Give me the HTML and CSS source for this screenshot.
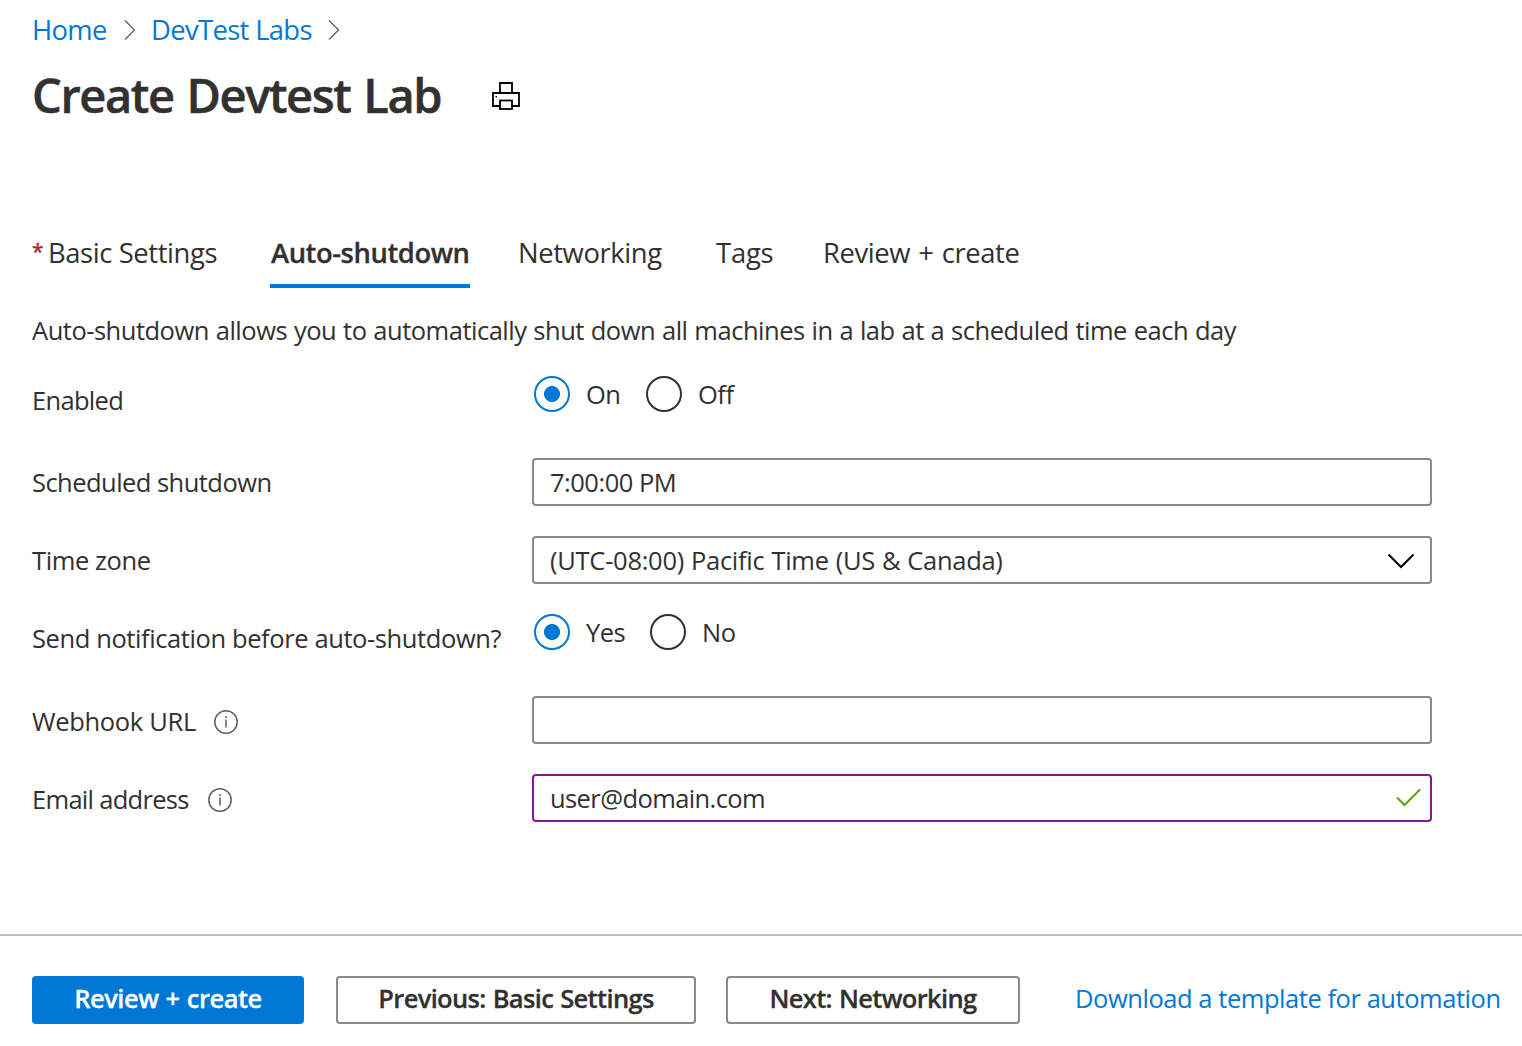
FILE: index.html
```html
<!DOCTYPE html>
<html lang="en">
<head>
<meta charset="utf-8">
<title>Create Devtest Lab</title>
<link rel="stylesheet" href="styles.css">
</head>
<body>
<div class="page">
  <nav class="breadcrumb">
    <a class="crumb crumb-home">Home</a>
    <svg class="crumb-sep" width="12" height="22" viewBox="0 0 12 22"><path d="M1 1.5 L10.5 11 L1 20.5"/></svg>
    <a class="crumb crumb-labs">DevTest Labs</a>
    <svg class="crumb-sep" width="12" height="22" viewBox="0 0 12 22"><path d="M1 1.5 L10.5 11 L1 20.5"/></svg>
  </nav>
  <header class="title-bar">
    <h1 class="title">Create Devtest Lab</h1>
    <svg class="printer" width="28" height="28" viewBox="0 0 28 28">
      <path d="M8 10.5V1H20V10.5M8 24H1V11H27V24H20"/><rect x="8" y="18.5" width="12" height="8.5"/><path class="printer-light" d="M3.5 14.6H5"/>
    </svg>
  </header>
  <div class="tabs">
    <div class="tab tab-basic"><span class="required">*</span>Basic Settings</div>
    <div class="tab tab-active">Auto-shutdown</div>
    <div class="tab tab-net">Networking</div>
    <div class="tab tab-tags">Tags</div>
    <div class="tab tab-review">Review + create</div>
  </div>
  <p class="description">Auto-shutdown allows you to automatically shut down all machines in a lab at a scheduled time each day</p>
  <form class="form">
    <div class="row row-radio">
      <label class="label label-tight">Enabled</label>
      <div class="radios">
        <span class="radio radio-on"></span><span class="radio-text">On</span>
        <span class="radio"></span><span class="radio-text">Off</span>
      </div>
    </div>
    <div class="row">
      <label class="label label-schedule">Scheduled shutdown</label>
      <div class="field field-time">7:00:00 PM</div>
    </div>
    <div class="row">
      <label class="label">Time zone</label>
      <div class="field field-zone">(UTC-08:00) Pacific Time (US &amp; Canada)
        <svg class="chevron" width="28" height="16" viewBox="0 0 28 16"><path d="M1.5 1.5 L14 14 L26.5 1.5"/></svg></div>
    </div>
    <div class="row row-radio">
      <label class="label">Send notification before auto-shutdown?</label>
      <div class="radios radios-notify">
        <span class="radio radio-on"></span><span class="radio-text">Yes</span>
        <span class="radio"></span><span class="radio-text">No</span>
      </div>
    </div>
    <div class="row">
      <label class="label label-info label-webhook"><span class="label-text">Webhook URL</span>
        <svg class="info" width="24" height="24" viewBox="0 0 24 24"><circle cx="12" cy="12" r="11.2"/><path d="M12 9.5V17.5M12 6V8"/></svg></label>
      <div class="field"></div>
    </div>
    <div class="row">
      <label class="label label-info label-email label-tight"><span class="label-text">Email address</span>
        <svg class="info" width="24" height="24" viewBox="0 0 24 24"><circle cx="12" cy="12" r="11.2"/><path d="M12 9.5V17.5M12 6V8"/></svg></label>
      <div class="field field-valid">user@domain.com
        <svg class="check" width="25" height="19" viewBox="0 0 25 19"><path d="M1 9.5 L8.5 17 L24 1.5"/></svg></div>
    </div>
  </form>
  <footer class="footer">
    <button class="button button-primary">Review + create</button>
    <button class="button button-prev">Previous: Basic Settings</button>
    <button class="button button-next">Next: Networking</button>
    <a class="download">Download a template for automation</a>
  </footer>
</div>
</body>
</html>
```

FILE: styles.css
```css
* { box-sizing: border-box; }
body {
  margin: 0;
  background: #fff;
  color: #323130;
  font-family: "Open Sans", "Noto Sans", sans-serif;
  font-size: 25.5px;
}
.page { display: flex; flex-direction: column; width: 1522px; height: 1046px; overflow: hidden; white-space: nowrap; }
svg { display: block; flex: none; fill: none; }
.breadcrumb { display: flex; align-items: center; height: 60px; padding-left: 32px; font-size: 27.4px; line-height: 60px; letter-spacing: -0.65px; color: #0078d4; }
.crumb-home { width: 92px; }
.crumb-labs { width: 177px; margin-left: 15px; }
.crumb-sep { stroke: #605e5c; stroke-width: 1.3; }
.title-bar { display: flex; align-items: center; height: 72px; padding-left: 32px; }
.title { margin: 0; width: 460px; padding-bottom: 2px; font-size: 47px; font-weight: 600; line-height: 70px; letter-spacing: -1.4px; word-spacing: 2px; -webkit-text-stroke: 0.5px #323130; }
.printer { stroke: #000; stroke-width: 1.8; }
.printer-light { stroke-width: 1.4; }
.tabs { display: flex; height: 72px; margin-top: 84px; padding-left: 32px; font-size: 27.4px; line-height: 74px; letter-spacing: -0.4px; }
.tab-basic { display: flex; width: 238px; }
.required { width: 16px; font-size: 21px; line-height: 70px; color: #a4262c; -webkit-text-stroke: 0.4px #a4262c; }
.tab-active { width: 200px; padding-left: 1px; font-weight: 600; letter-spacing: -0.45px; border-bottom: 4px solid #0078d4; -webkit-text-stroke: 0.3px #323130; }
.tab-net { width: 246px; padding-left: 48px; }
.tab-tags { width: 107px; letter-spacing: -0.2px; }
.tab-review { letter-spacing: -0.4px; word-spacing: 1.5px; }
.description { margin: 22px 0 0 32px; line-height: 40px; letter-spacing: -0.49px; word-spacing: 0.7px; }
.form { display: flex; flex-direction: column; padding: 26px 0 0 32px; }
.row { display: flex; height: 48px; margin-bottom: 30px; }
.row-radio { height: 52px; }
.label { width: 500px; line-height: 48px; letter-spacing: -0.4px; }
.label-schedule { letter-spacing: -0.54px; }
.label-tight { letter-spacing: -0.7px; }
.label-info { display: flex; align-items: center; height: 52px; line-height: 50px; }
.label-text { padding-bottom: 2px; }
.label-webhook .label-text { width: 182px; letter-spacing: -0.32px; }
.label-email .label-text { width: 176px; }
.radios { display: flex; height: 36px; line-height: 36px; padding-left: 2px; letter-spacing: -0.5px; }
.radio { width: 36px; height: 36px; border: 2px solid #323130; border-radius: 50%; }
.radio-on { border-color: #0078d4; background: radial-gradient(circle, #0078d4 7.6px, transparent 8.4px); }
.radio-text { width: 76px; padding-left: 16px; }
.radios-notify .radio-text { width: 80px; }
.field { display: flex; align-items: center; justify-content: space-between; width: 900px; height: 48px; padding: 0 16px; border: 2px solid #8a8886; border-radius: 4px; line-height: 44px; }
.field-time { letter-spacing: -0.5px; }
.field-zone { padding-right: 15px; letter-spacing: -0.27px; word-spacing: 0.6px; }
.field-valid { padding-right: 9px; border-color: #881798; letter-spacing: -0.6px; }
.chevron { margin-top: 2px; stroke: #000; stroke-width: 2; }
.check { margin-bottom: 1px; stroke: #57a300; stroke-width: 2; }
.info { stroke: #605e5c; stroke-width: 1.5; }
.footer { display: flex; height: 112px; margin-top: auto; padding: 40px 0 0 32px; border-top: 2px solid #bdbdbd; }
.button { height: 48px; padding: 0 0 4px; border: 2px solid #8a8886; border-radius: 4px; background: #fff; color: #323130; font: 600 25.5px/40px "Open Sans", sans-serif; letter-spacing: -0.65px; word-spacing: 1px; -webkit-text-stroke: 0.3px currentColor; }
.button-primary { width: 272px; margin-right: 32px; background: #0078d4; border-color: #0078d4; color: #fff; letter-spacing: -0.5px; }
.button-prev { width: 360px; margin-right: 30px; }
.button-next { width: 294px; }
.download { margin-left: 55px; line-height: 45px; letter-spacing: -0.45px; color: #0078d4; }
```
